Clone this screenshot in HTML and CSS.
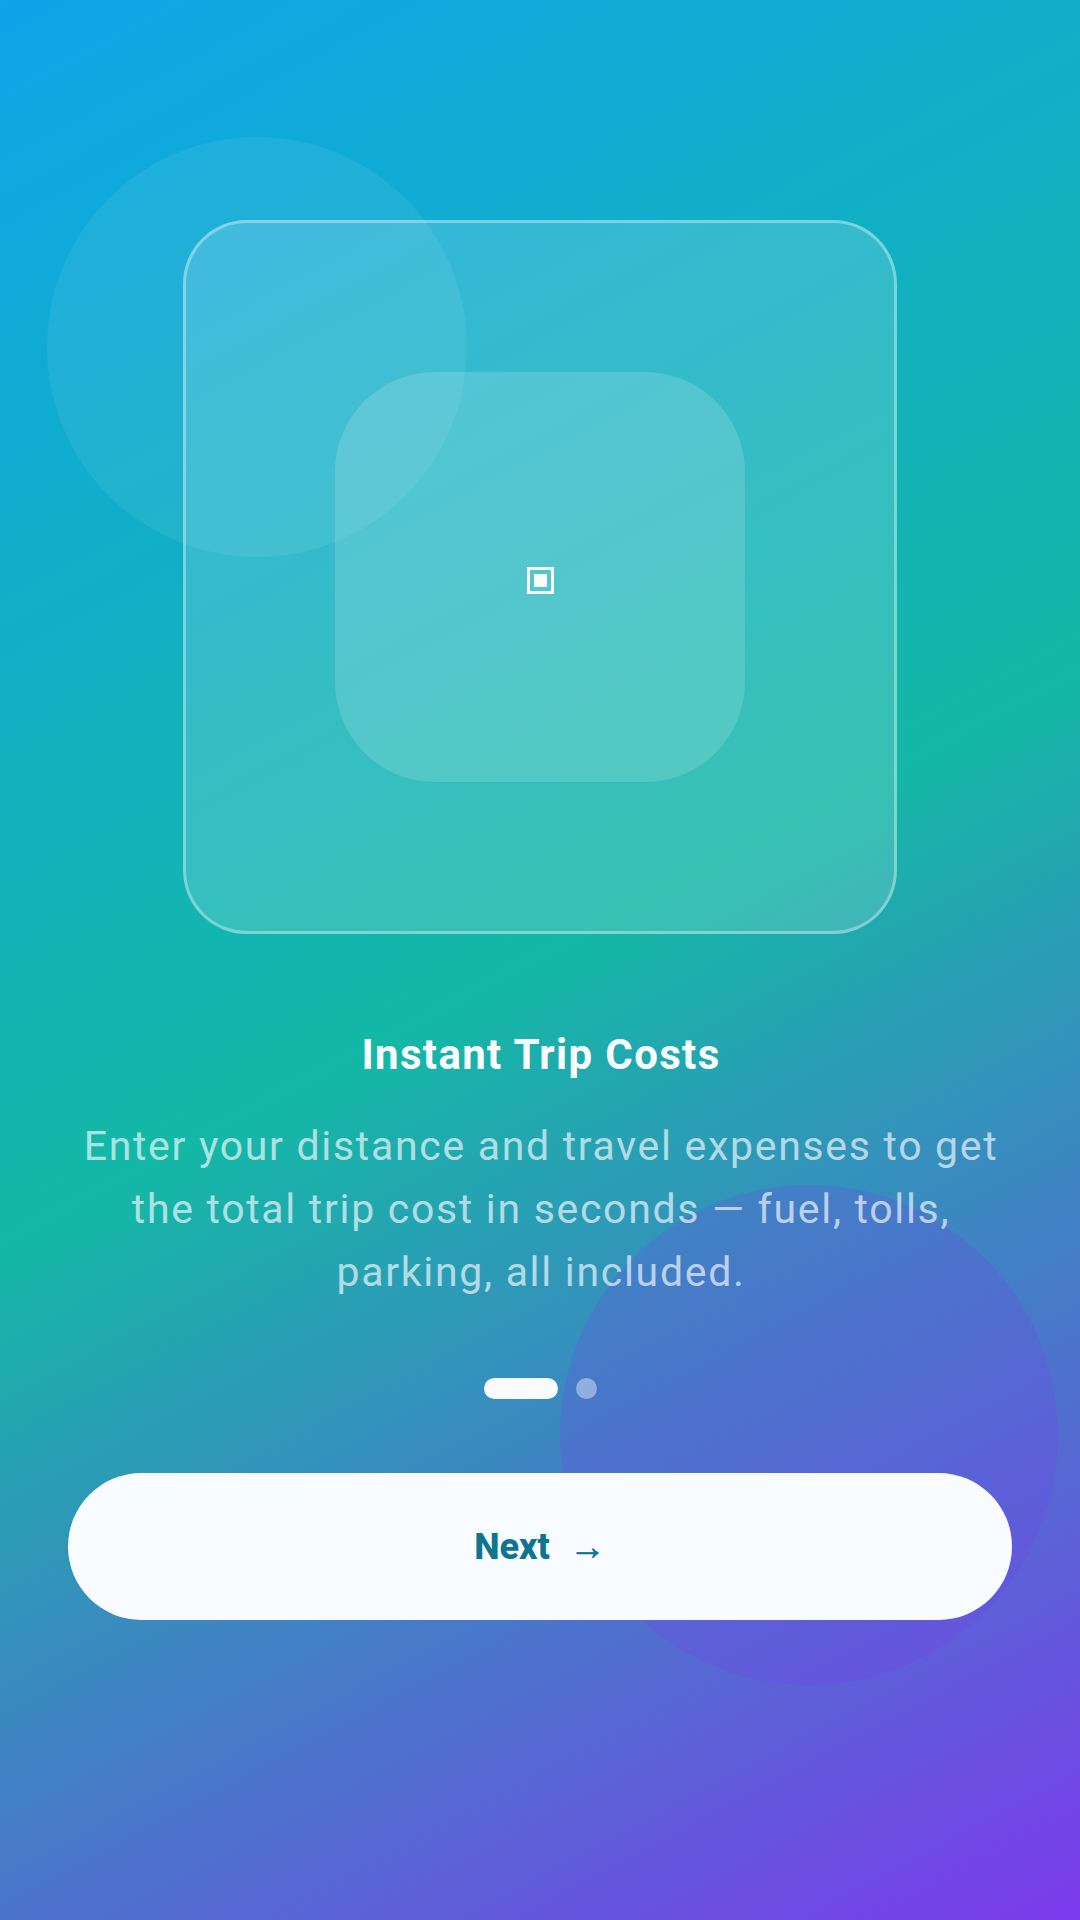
FILE: index.html
```html
<!DOCTYPE html>
<html lang="en">
<head>
<meta charset="utf-8">
<title>Instant Trip Costs</title>
<link rel="stylesheet" href="styles.css">
</head>
<body>
<main class="screen">
  <div class="blob blob-top"></div>
  <div class="blob blob-bottom"></div>
  <div class="content">
    <div class="card">
      <div class="tile">
        <svg class="glyph" width="27" height="27" viewBox="0 0 27 27" aria-hidden="true">
          <rect x="1.5" y="1.5" width="24" height="24" fill="none" stroke="#f8fbff" stroke-width="3"/>
          <rect x="7" y="7" width="13" height="13" fill="#f8fbff"/>
        </svg>
      </div>
    </div>
    <h1 class="title">Instant Trip Costs</h1>
    <p class="desc">Enter your distance and travel expenses to get the total trip cost in seconds — fuel, tolls, parking, all included.</p>
    <div class="dots">
      <span class="dot dot-active"></span>
      <span class="dot"></span>
    </div>
    <button class="next" type="button"><span class="next-label">Next</span><span class="arrow">→</span></button>
  </div>
</main>
</body>
</html>
```
FILE: styles.css
```css
* { box-sizing: border-box; }
html, body { margin: 0; padding: 0; }
body { font-family: Roboto, "Noto Sans", sans-serif; }
.screen {
  position: relative;
  width: 1080px;
  height: 1920px;
  overflow: hidden;
  background: linear-gradient(152deg, #0ea5e9 0%, #14b8a6 50%, #7c3aed 100%);
}
.blob { position: absolute; border-radius: 50%; }
.blob-top {
  left: 47px; top: 137px; width: 420px; height: 420px;
  background: rgba(255,255,255,0.07);
}
.blob-bottom {
  left: 560px; top: 1185px; width: 498px; height: 500px;
  background: rgba(124,58,237,0.22);
}
.content {
  position: relative;
  display: flex;
  flex-direction: column;
  align-items: center;
  padding: 220px 68px 0;
}
.card {
  width: 714px; height: 714px;
  border: 3px solid rgba(255,255,255,0.35);
  border-radius: 64px;
  background: rgba(255,255,255,0.15);
  display: flex; align-items: center; justify-content: center;
}
.tile {
  width: 410px; height: 410px;
  border-radius: 100px;
  background: rgba(255,255,255,0.15);
  display: flex; align-items: center; justify-content: center;
  padding-top: 7px;
}
.glyph { display: block; }
.title {
  margin: 97px 0 0;
  padding-left: 2px;
  font-size: 42px; line-height: 48px; font-weight: 700;
  letter-spacing: 1.35px;
  color: #f8fbff;
  text-align: center;
}
.desc {
  margin: 36px 0 0;
  padding-left: 2px;
  width: 944px;
  font-size: 41px; line-height: 63px; font-weight: 400;
  letter-spacing: 1.69px;
  color: rgba(248,251,255,0.68);
  text-align: center;
}
.dots { display: flex; gap: 18px; margin-top: 74px; }
.dot { width: 21px; height: 21px; border-radius: 11px; background: rgba(255,255,255,0.4); }
.dot-active { width: 74px; background: #f8fbff; }
.next {
  margin-top: 74px;
  width: 944px; height: 147px;
  border: 0; border-radius: 74px;
  background: #f8fbff;
  color: #0e7490;
  font-family: inherit;
  font-size: 36px; font-weight: 800;
  display: flex; align-items: center; justify-content: center; gap: 20px;
}
.arrow { -webkit-text-stroke: 0.7px #0e7490; }
```
